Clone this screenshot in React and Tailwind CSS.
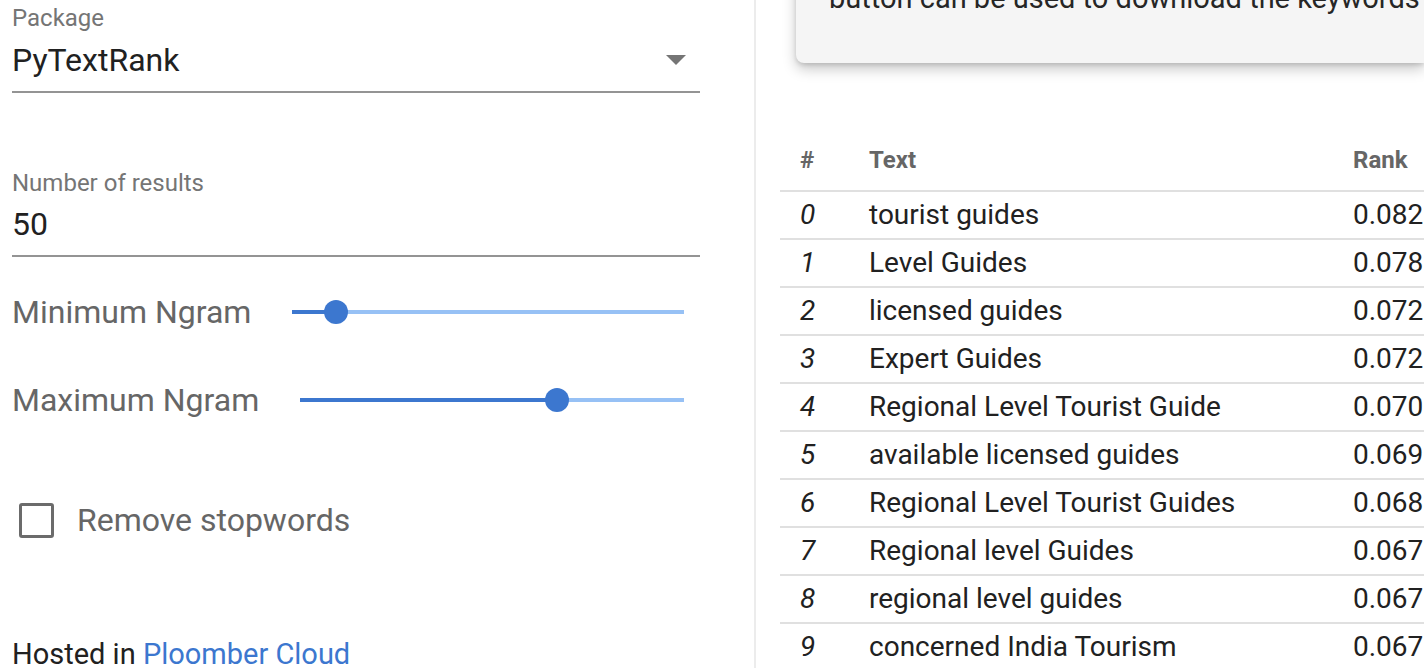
import React from "react";

const rows = [
  ["0", "tourist guides", "0.082"],
  ["1", "Level Guides", "0.078"],
  ["2", "licensed guides", "0.072"],
  ["3", "Expert Guides", "0.072"],
  ["4", "Regional Level Tourist Guide", "0.070"],
  ["5", "available licensed guides", "0.069"],
  ["6", "Regional Level Tourist Guides", "0.068"],
  ["7", "Regional level Guides", "0.067"],
  ["8", "regional level guides", "0.067"],
  ["9", "concerned India Tourism", "0.067"],
];

function Slider({ pct }) {
  return (
    <div className="relative flex-1 h-[24px] flex items-center">
      <div className="w-full h-[4px] bg-[#97c1f5] flex">
        <div className="h-full bg-[#3c77cf]" style={{ width: pct + "%" }} />
      </div>
      <div
        className="absolute top-0 w-[24px] h-[24px] rounded-full bg-[#3c77cf] -translate-x-1/2"
        style={{ left: pct + "%" }}
      />
    </div>
  );
}

export default function App() {
  return (
    <div
      className="w-[1424px] h-[668px] overflow-hidden flex bg-white"
      style={{ fontFamily: "Roboto, 'Liberation Sans', sans-serif" }}
    >
      {/* Left panel */}
      <div className="w-[756px] shrink-0 border-r-2 border-[#ececec] pl-[12px] pr-[54px] overflow-hidden">
        <div className="h-[26px] mt-[5px] flex items-center text-[24px] text-[#757575] leading-none">
          Package
        </div>
        <div className="h-[40px] mt-[9px] flex items-center justify-between text-[32px] text-[#212121] leading-none">
          <span>PyTextRank</span>
          <svg width="20" height="10" viewBox="0 0 20 10" className="mr-[14px]">
            <path d="M0 0 L20 0 L10 10 Z" fill="#757575" />
          </svg>
        </div>
        <div className="mt-[11px] h-[2px] bg-[#949494]" />

        <div className="h-[26px] mt-[77px] flex items-center text-[24px] text-[#757575] leading-none">
          Number of results
        </div>
        <div className="h-[40px] mt-[8px] flex items-center text-[32px] text-[#212121] leading-none">
          50
        </div>
        <div className="mt-[11px] h-[2px] bg-[#949494]" />

        <div className="mt-[35px] h-[40px] flex items-center gap-[41px] pr-[16px]">
          <span className="text-[32px] text-[#666] leading-none whitespace-nowrap">Minimum Ngram</span>
          <Slider pct={11.2} />
        </div>
        <div className="mt-[48px] h-[40px] flex items-center gap-[41px] pr-[16px]">
          <span className="text-[32px] text-[#666] leading-none whitespace-nowrap">Maximum Ngram</span>
          <Slider pct={66.8} />
        </div>

        <div className="mt-[80px] h-[40px] flex items-center">
          <div className="ml-[7px] w-[35px] h-[35px] border-[3px] border-[#6b6b6b] rounded-[3px]" />
          <span className="ml-[23px] text-[32px] text-[#666] leading-none">Remove stopwords</span>
        </div>

        <div className="mt-[94px] h-[40px] flex items-center text-[29px] text-[#212121] leading-none whitespace-nowrap">
          Hosted in&nbsp;<span className="text-[#3c77cf]">Ploomber Cloud</span>
        </div>
      </div>

      {/* Right panel */}
      <div className="flex-1 min-w-0 pl-[24px] flex flex-col">
        <div className="ml-[16px] mt-[-21px] bg-[#f5f5f5] rounded-bl-[8px] pl-[33px] pt-[0px] pb-[46px] shadow-[0_6px_14px_rgba(0,0,0,0.22),0_2px_4px_rgba(0,0,0,0.12)] whitespace-nowrap text-[29px] leading-[38px] text-[#262626]">
          button can be used to download the keywords as a CSV file.
        </div>

        <div className="mt-[67px] flex flex-col whitespace-nowrap">
          <div className="h-[62px] flex items-center border-b-2 border-[#e0e0e0] text-[24px] font-bold text-[#666]">
            <div className="w-[89px] pl-[20px]">#</div>
            <div className="w-[484px]">Text</div>
            <div>Rank</div>
          </div>
          {rows.map(([i, t, r]) => (
            <div
              key={i}
              className="h-[48px] shrink-0 flex items-center border-b-2 border-[#e0e0e0] text-[28px] text-[#212121]"
            >
              <div className="w-[89px] pl-[20px] italic">{i}</div>
              <div className="w-[484px]">{t}</div>
              <div>{r}</div>
            </div>
          ))}
        </div>
      </div>
    </div>
  );
}
